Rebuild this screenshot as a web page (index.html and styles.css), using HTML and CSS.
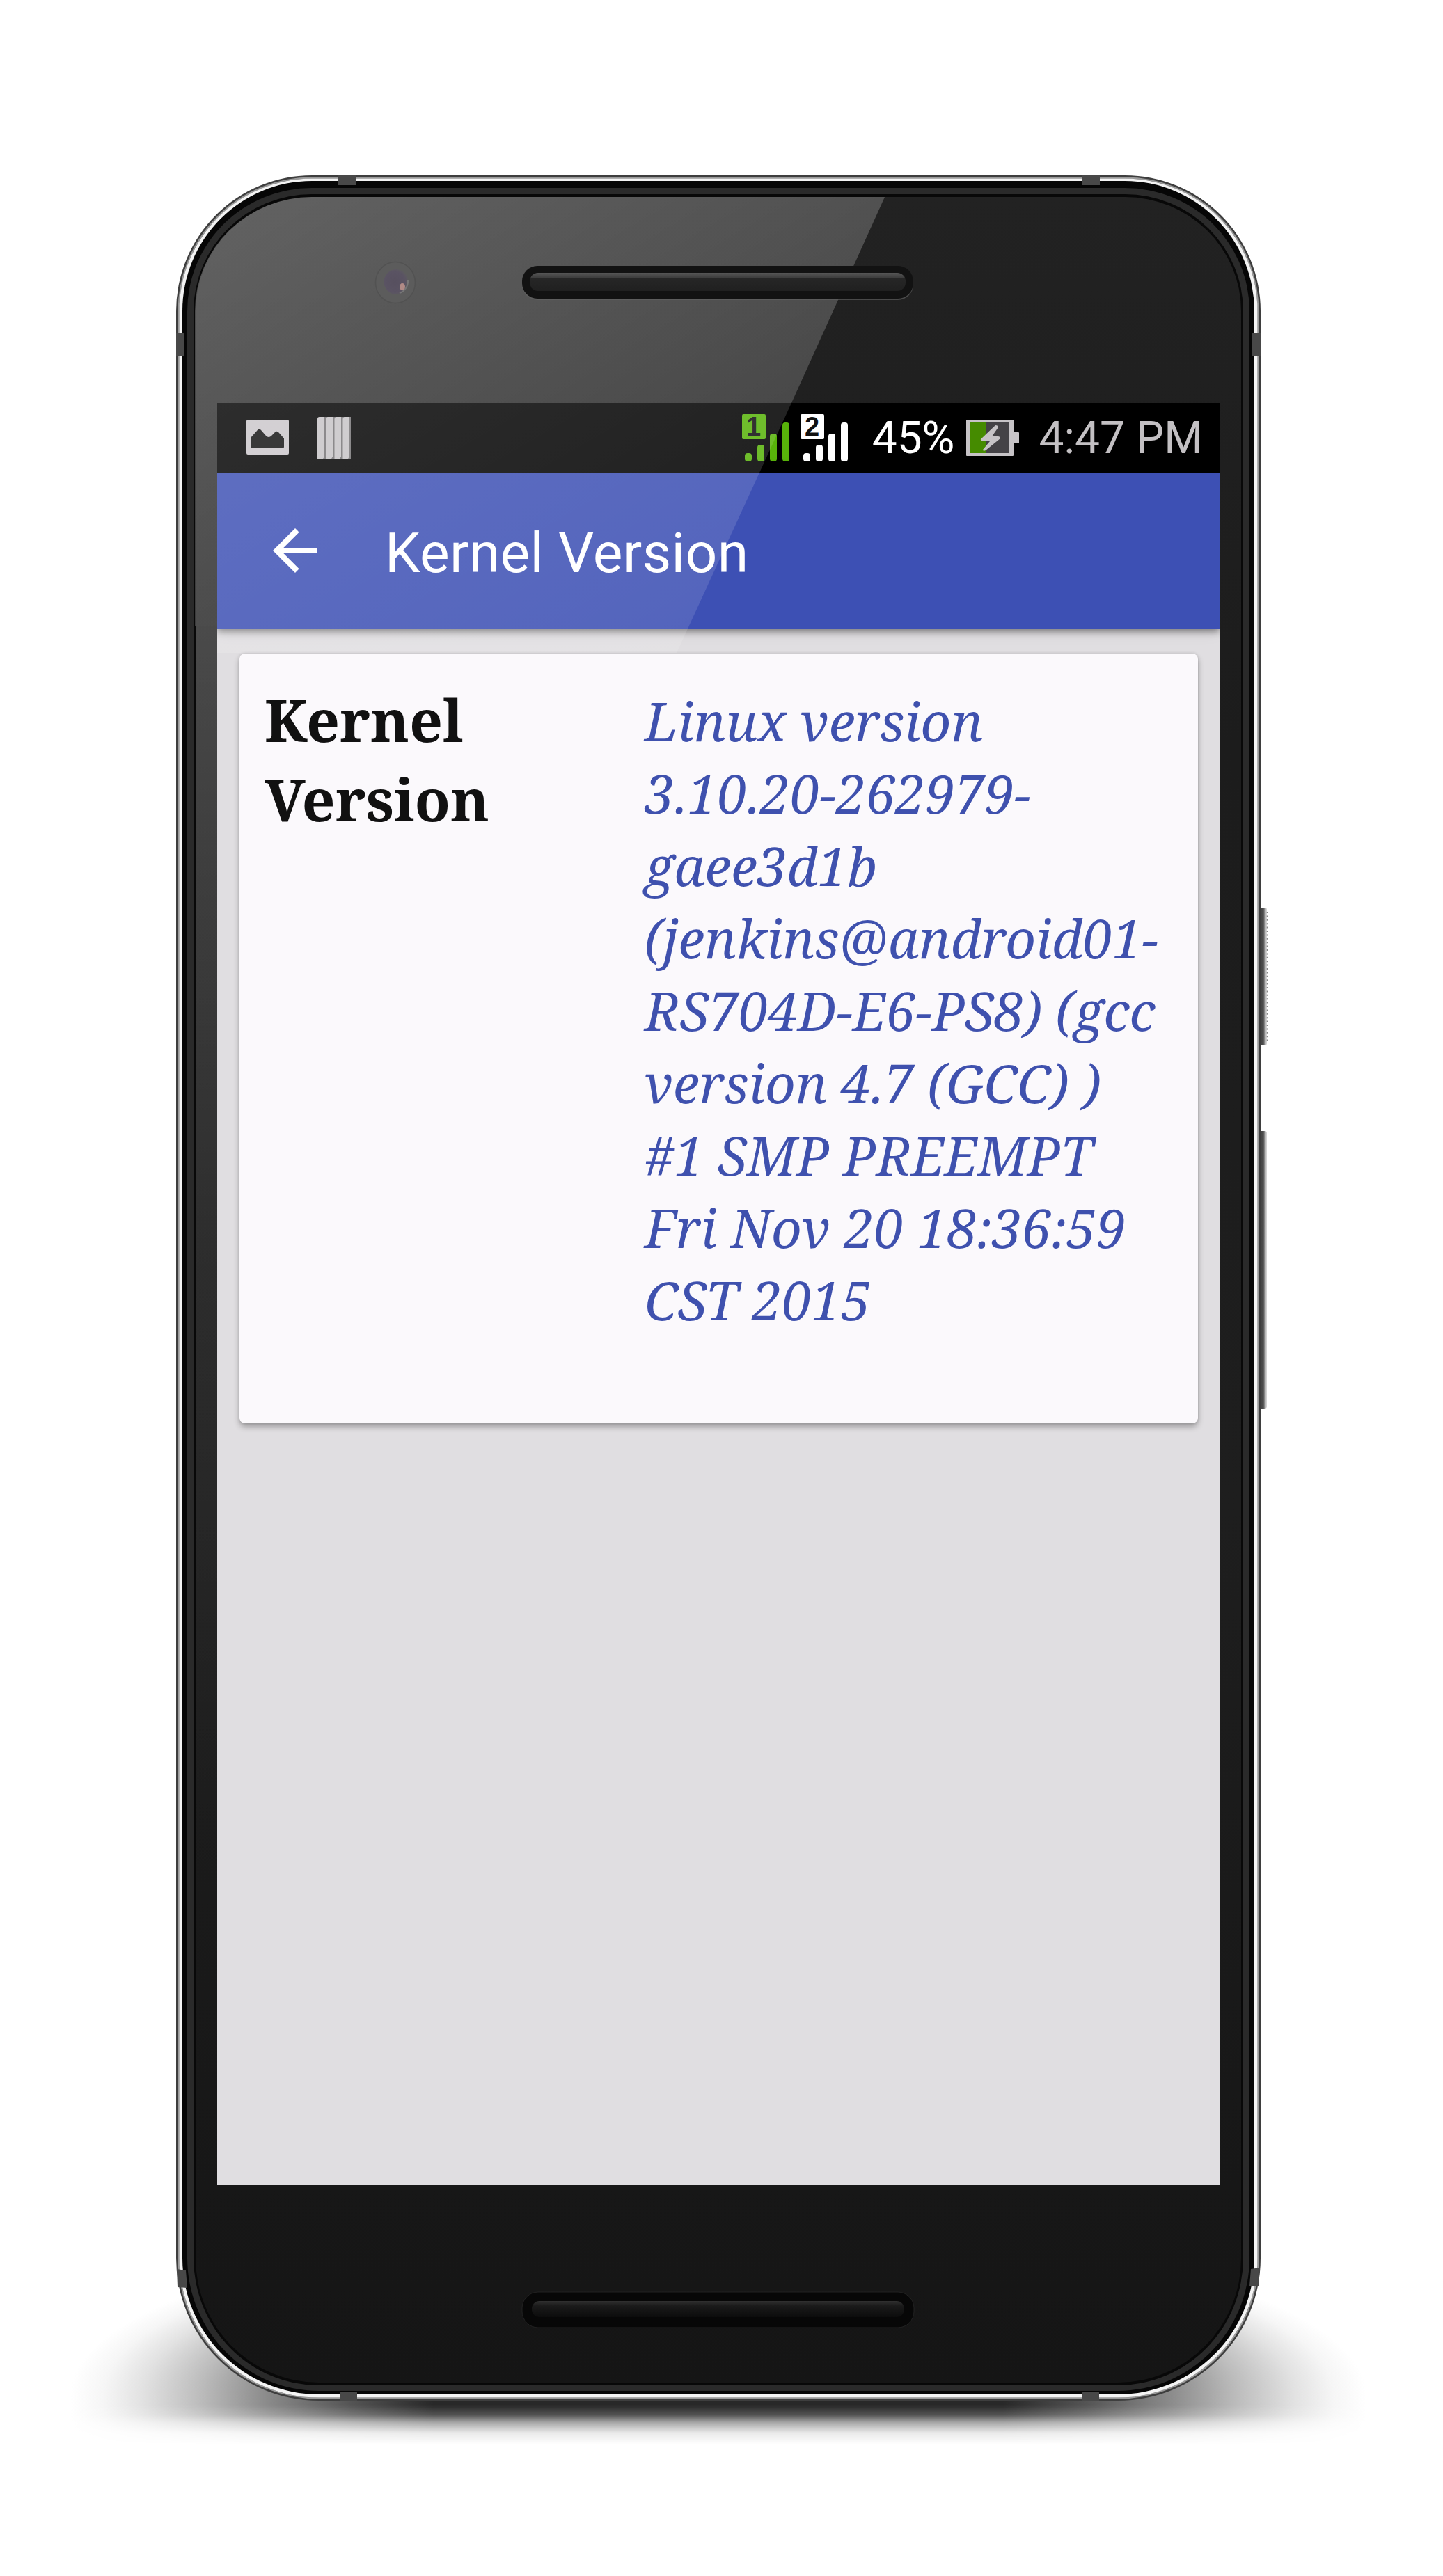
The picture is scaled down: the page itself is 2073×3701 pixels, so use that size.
FILE: index.html
```html
<!DOCTYPE html>
<html lang="en">
<head>
<meta charset="utf-8">
<title>Kernel Version</title>
<link rel="stylesheet" href="styles.css">
</head>
<body>
<div class="stage">
  <div class="ground"></div>
  <svg class="device" viewBox="0 0 2073 3701" aria-hidden="true">
    <defs>
      <linearGradient id="glass" x1="0" y1="0" x2="0" y2="1">
        <stop offset="0" stop-color="#222"/><stop offset=".25" stop-color="#1c1c1c"/>
        <stop offset=".6" stop-color="#1e1e1e"/><stop offset="1" stop-color="#151515"/>
      </linearGradient>
      <linearGradient id="glare" gradientUnits="userSpaceOnUse" x1="300" y1="300" x2="1000" y2="1500">
        <stop offset="0" stop-color="#fff" stop-opacity=".29"/><stop offset=".45" stop-color="#fff" stop-opacity=".19"/>
        <stop offset="1" stop-color="#fff" stop-opacity=".04"/>
      </linearGradient>
      <linearGradient id="edge" x1="0" y1="0" x2="0" y2="1">
        <stop offset="0" stop-color="#fff" stop-opacity=".2"/><stop offset=".5" stop-color="#fff" stop-opacity=".07"/>
        <stop offset="1" stop-color="#fff" stop-opacity="0"/>
      </linearGradient>
      <linearGradient id="key" x1="0" y1="0" x2="1" y2="0">
        <stop offset="0" stop-color="#3a3a3a"/><stop offset=".6" stop-color="#505050"/>
        <stop offset=".75" stop-color="#999"/><stop offset="1" stop-color="#ddd"/>
      </linearGradient>
      <radialGradient id="lens" cx=".45" cy=".5" r=".55">
        <stop offset="0" stop-color="#57505f"/><stop offset=".75" stop-color="#5a5363"/><stop offset="1" stop-color="#5d5b5f"/>
      </radialGradient>
      <linearGradient id="bar" x1="0" y1="0" x2="0" y2="1">
        <stop offset="0" stop-color="#555"/><stop offset=".28" stop-color="#3c3c3c"/>
        <stop offset=".32" stop-color="#262626"/><stop offset="1" stop-color="#202020"/>
      </linearGradient>
      <linearGradient id="barLow" x1="0" y1="0" x2="0" y2="1">
        <stop offset="0" stop-color="#303030"/><stop offset=".3" stop-color="#1a1a1a"/><stop offset="1" stop-color="#0c0c0c"/>
      </linearGradient>
    </defs>
    <!-- side keys -->
    <rect x="1808" y="1304" width="12" height="198" rx="3" fill="url(#key)"/>
    <path d="M1820.5 1310V1498" stroke="#888" stroke-width="1.5" stroke-dasharray="2 3.4"/>
    <rect x="1808" y="1625" width="12" height="399" rx="3" fill="url(#key)"/>
    <!-- metal rim, from the outside in -->
    <path fill="#3e3e3e" d="M448 252H1616A195 195 0 0 1 1811 447V3244A205 205 0 0 1 1606 3449H458A205 205 0 0 1 253 3244V447A195 195 0 0 1 448 252Z"/>
    <path fill="none" stroke="#9a9a9a" stroke-width="2" d="M448 255.5H1616A191.500 191.500 0 0 1 1807.500 447V3244A201.500 201.500 0 0 1 1606 3445.500H458A201.500 201.500 0 0 1 256.500 3244V447A191.500 191.500 0 0 1 448 255.500Z"/>
    <path fill="#f4f4f4" d="M448 256.500H1616A190.500 190.500 0 0 1 1806.500 447V3244A200.500 200.500 0 0 1 1606 3444.500H458A200.500 200.500 0 0 1 257.500 3244V447A190.500 190.500 0 0 1 448 256.500Z"/>
    <path fill="#060606" d="M448 260H1616A186 187 0 0 1 1802 447V3244A196 196 0 0 1 1606 3440H458A196 196 0 0 1 262 3244V447A186 187 0 0 1 448 260Z"/>
    <path fill="#2a2a2a" d="M448 270H1616A179 177 0 0 1 1795 447V3244A189 191 0 0 1 1606 3435H458A189 191 0 0 1 269 3244V447A179 177 0 0 1 448 270Z"/>
    <path fill="#080808" d="M448 279H1616A170 168 0 0 1 1786 447V3244A180 183 0 0 1 1606 3427H458A180 183 0 0 1 278 3244V447A170 168 0 0 1 448 279Z"/>
    <path fill="url(#glass)" d="M448 283H1616A167 164 0 0 1 1783 447V3244A177 179 0 0 1 1606 3423H458A177 179 0 0 1 281 3244V447A167 164 0 0 1 448 283Z"/>
    <!-- antenna bands -->
    <path fill="#484848" d="M485 252h26v14h-26zM1555 252h25v14h-25zM253 478h11v34h-11zM1799 478h12v34h-12zM488 3437h25v12h-25zM1555 3436h24v13h-24zM254 3260l13 2 2 25-14-1zM1797 3260l13-2-2 26-13 0z"/>
    <!-- reflection over the upper left of the glass and the left bezel -->
    <path fill="url(#edge)" d="M281 900H312V2700H281Z"/>
    <path fill="url(#glare)" d="M448 283H1271L1137 579H312V900H280V447A168 164 0 0 1 448 283Z"/>
    <!-- earpiece -->
    <rect x="750" y="383" width="562" height="48" rx="22" fill="#666" opacity=".6"/>
    <rect x="750" y="382" width="562" height="47" rx="22" fill="#121212"/>
    <rect x="761" y="392" width="540" height="26" rx="12" fill="url(#bar)"/>
    <!-- front camera -->
    <ellipse cx="568" cy="406" rx="28.500" ry="29.500" fill="#5c5c5c" stroke="#525252" stroke-width="1.500"/>
    <ellipse cx="569" cy="405" rx="17.500" ry="18" fill="url(#lens)"/>
    <path d="M574 421a18 18 0 0 0 12-18" fill="none" stroke="#777" stroke-width="2"/>
    <ellipse cx="578" cy="412" rx="4" ry="5" fill="#b08a86"/>
    <!-- lower speaker -->
    <rect x="750" y="3293" width="563" height="51" rx="23" fill="#070707" stroke="#222" stroke-width="1"/>
    <rect x="764" y="3306" width="535" height="23" rx="11" fill="url(#barLow)"/>
  </svg>

  <main class="screen">
    <header class="status">
      <div class="status-left">
        <svg class="ico-picture" viewBox="0 0 61 50"><rect width="61" height="50" rx="2" fill="#cac6ca"/><path fill="#111" d="M6 26 15 16Q18 11 21 15L28 23Q32 27 36 23L41 18Q44 15 47 19L54 27V39Q54 41 52 41H8Q6 41 6 39Z"/></svg>
        <svg class="ico-bars" viewBox="0 0 48 60"><path fill="#757375" d="M3 0H48V60H0V3Z"/><path fill="#c6c3c6" d="M0 3Q0 0 3 0H10V57L8 60H0ZM12.500 3Q13 0 15 0H22V57L20 60H12.500ZM24.500 3Q25 0 27 0H34V57L32 60H24.500ZM36.500 3Q37 0 39 0H46V57L44 60H36.500Z"/></svg>
      </div>
      <div class="status-right">
        <div class="sim sim-one"><span class="sim-num">1</span><svg viewBox="0 0 68 68"><g fill="currentColor"><rect x="4" y="56" width="10" height="12" rx="4"/><rect x="22" y="44" width="10" height="24" rx="4"/><rect x="40" y="28" width="10" height="40" rx="4"/><rect x="58" y="12" width="10" height="56" rx="4"/></g></svg></div>
        <div class="sim sim-two"><span class="sim-num">2</span><svg viewBox="0 0 68 68"><g fill="currentColor"><rect x="4" y="56" width="10" height="12" rx="4"/><rect x="22" y="44" width="10" height="24" rx="4"/><rect x="40" y="28" width="10" height="40" rx="4"/><rect x="58" y="12" width="10" height="56" rx="4"/></g></svg></div>
        <span class="percent">45%</span>
        <svg class="ico-battery" viewBox="0 0 76 52"><path fill="#c6c3c6" d="M0 1Q0 0 1 0H67Q68 0 68 1V18H75Q76 18 76 19V33Q76 34 75 34H68V51Q68 52 67 52H1Q0 52 0 51Z"/><path fill="#444246" d="M6 4H62V48H6Z"/><path fill="#458b00" d="M6 4H28V48H6Z"/><path fill="#c6c3c6" d="M42 8 21 28Q20 30 24 31L34 31 24 43Q24 46 28 44L49 27Q50 25 46 24H37L46 11Q46 8 42 8Z"/></svg>
        <span class="clock">4:47 PM</span>
      </div>
    </header>
    <nav class="appbar">
      <svg class="back" viewBox="0 0 24 24"><path fill="#fff" d="M20 11H7.830l5.590-5.590L12 4l-8 8 8 8 1.410-1.410L7.830 13H20v-2z"/></svg>
      <h1 class="title">Kernel Version</h1>
    </nav>
    <section class="content">
      <article class="card">
        <h2 class="label">Kernel Version</h2>
        <p class="value">Linux version<br>3.10.20-262979-<br>gaee3d1b<br>(jenkins@android01-<br>RS704D-E6-PS8) (gcc<br>version 4.7 (GCC) )<br>#1 SMP PREEMPT<br>Fri Nov 20 18:36:59<br>CST 2015</p>
      </article>
    </section>
    <div class="glare"></div>
  </main>
</div>
</body>
</html>
```
FILE: styles.css
```css
* { box-sizing: border-box; margin: 0; padding: 0; }
body { background: #fff; font-family: Roboto, sans-serif; }

.stage { position: relative; width: 2073px; height: 3701px; padding: 579px 321px 562px 312px; overflow: hidden; }
.device { position: absolute; inset: 0; width: 2073px; height: 3701px; }

/* contact shadow: a tall soft half above the base line, a shallow one below */
.ground { position: absolute; left: 102px; top: 3189px; width: 1860px; height: 326px; }
.ground::before, .ground::after { content: ""; position: absolute; left: 0; right: 0; }
.ground::before { top: 0; height: 250px; background: radial-gradient(ellipse 930px 250px at 50% 100%, #282828 0 44%, #555 57%, #8c8c8c 70%, #bcbcbc 80%, #e2e2e2 89%, #f6f6f6 95%, #fff 100%); }
.ground::after { top: 250px; height: 76px; background: linear-gradient(90deg, #fff 0, #f6f6f6 2.5%, #e2e2e2 5.5%, #bcbcbc 10%, #8c8c8c 15%, #555 21.5%, #282828 28% 72%, #555 78.5%, #8c8c8c 85%, #bcbcbc 90%, #e2e2e2 94.5%, #f6f6f6 97.5%, #fff 100%); -webkit-mask-image: linear-gradient(#000 0 22%, rgba(0, 0, 0, .8) 40%, rgba(0, 0, 0, .4) 55%, rgba(0, 0, 0, .1) 74%, transparent 96%); mask-image: linear-gradient(#000 0 22%, rgba(0, 0, 0, .8) 40%, rgba(0, 0, 0, .4) 55%, rgba(0, 0, 0, .1) 74%, transparent 96%); }

.screen { position: relative; display: flex; flex-direction: column; width: 1440px; height: 2560px; background: #e0dee1; overflow: hidden; }

.status { display: flex; justify-content: space-between; height: 100px; background: #000; }
.status-left { display: flex; align-items: flex-start; gap: 41px; padding: 20px 0 0 42px; }
.ico-picture { width: 61px; height: 50px; margin-top: 4px; }
.ico-bars { width: 48px; height: 60px; }
.status-right { display: flex; align-items: flex-start; padding: 16px 24px 0 0; }
.sim { position: relative; width: 68px; height: 68px; }
.sim svg { display: block; width: 68px; height: 68px; }
.sim-one { color: #58b30a; margin-right: 16px; }
.sim-two { color: #fff; margin-right: 35px; }
.sim-num { position: absolute; left: 0; top: 0; width: 34px; height: 36px; border-radius: 2px; background: currentColor; font: bold 38px/37px "Liberation Sans", sans-serif; text-align: center; -webkit-text-fill-color: #111; }
.percent, .clock { font-size: 64px; line-height: 75px; white-space: nowrap; margin-top: -3px; }
.percent { color: #fff; margin-right: 17px; }
.ico-battery { width: 76px; height: 52px; margin: 8px 28px 0 0; }
.clock { color: #c3c0c3; }

.appbar { position: relative; z-index: 1; display: flex; align-items: center; height: 224px; padding-left: 64px; background: #3d50b4; box-shadow: 0 4px 10px rgba(0, 0, 0, .45), 0 0 24px rgba(0, 0, 0, .12); }
.back { width: 96px; height: 96px; }
.title { margin: 8px 0 0 81px; color: #fff; font-size: 80.500px; font-weight: 400; line-height: 96px; letter-spacing: .4px; white-space: nowrap; }

.content { padding: 36px 31.500px 0 32px; }
.card { display: flex; height: 1106px; padding: 38px 20px 0 36px; border-radius: 8px; background: #fbf9fc; box-shadow: 0 5px 9px rgba(0, 0, 0, .3), 0 0 4px rgba(0, 0, 0, .12); font-family: "Noto Serif", "DejaVu Serif", serif; }
.label { width: 546px; padding-right: 140px; color: #111; font-size: 84px; font-weight: 700; line-height: 114px; }
.value { color: #3f51ae; font-size: 76.300px; font-style: italic; line-height: 104px; white-space: nowrap; padding-top: 6px; }

/* reflection continuing across the screen */
.glare { position: absolute; z-index: 2; inset: 0; background: linear-gradient(150deg, rgba(255, 255, 255, .175) 0, rgba(255, 255, 255, .12) 20%, rgba(255, 255, 255, .06) 30%, rgba(255, 255, 255, 0) 40%); clip-path: polygon(0 0, 825px 0, 660px 359px, 0 359px); pointer-events: none; }
```
